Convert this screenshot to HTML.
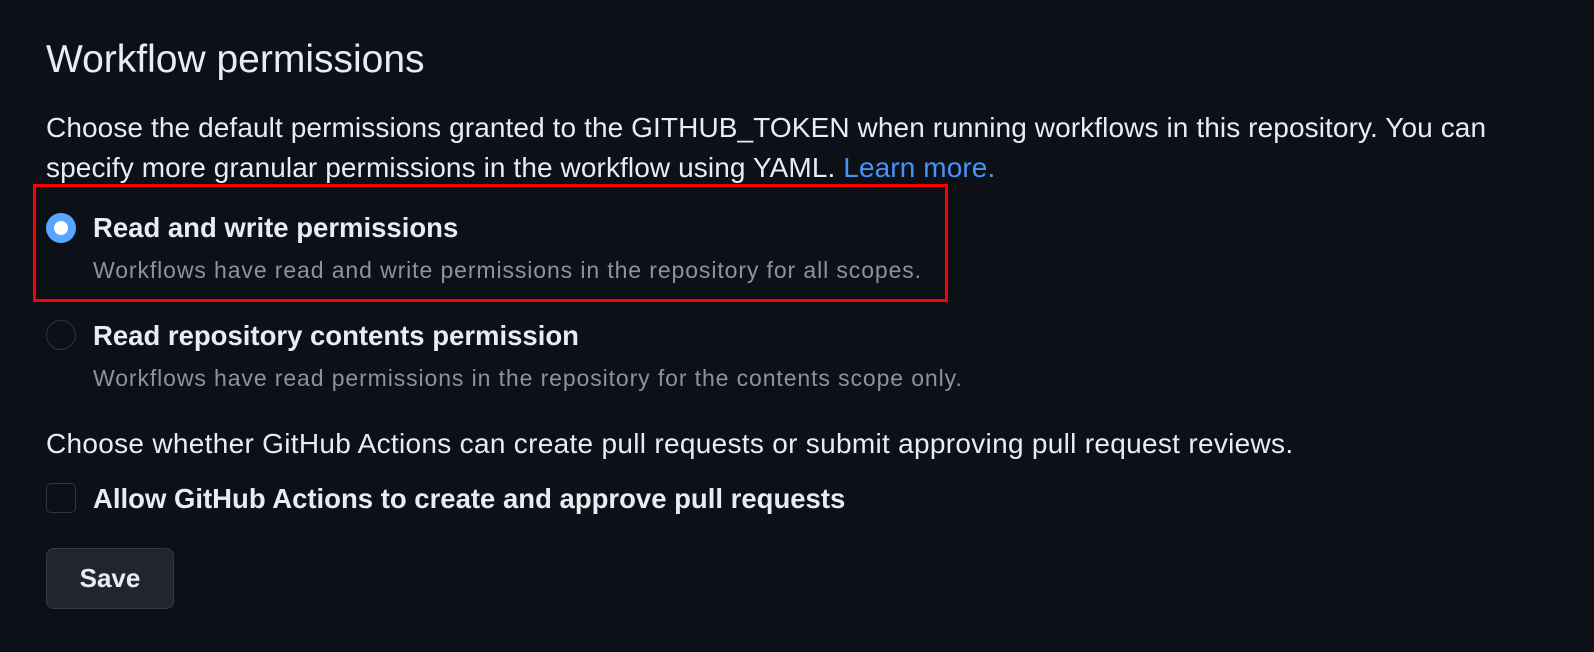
<!DOCTYPE html>
<html><head><meta charset="utf-8"><style>
body{margin:0;width:1594px;height:652px;background:#0d1117;font-family:"Liberation Sans",sans-serif;color:#e6edf3;position:relative;overflow:hidden}
.a{position:absolute;white-space:nowrap}
h1{position:absolute;left:46px;top:37px;margin:0;font-weight:400;font-size:39px;line-height:46px;color:#e6edf3}
.p{font-size:28px;color:#e6edf3;line-height:40px;letter-spacing:0.3px}
.b{font-size:27.5px;line-height:32px;font-weight:700;color:#e6edf3}
.d{font-size:23px;line-height:28px;color:#8b949e;letter-spacing:0.9px}
a{color:#4493f8;text-decoration:none}
</style></head><body>
<h1>Workflow permissions</h1>
<div class="a p" style="left:46px;top:108px;letter-spacing:0.1px">Choose the default permissions granted to the GITHUB_TOKEN when running workflows in this repository. You can<br>specify more granular permissions in the workflow using YAML. <a>Learn more.</a></div>
<div class="a" style="left:33px;top:184px;width:909px;height:112px;border:3px solid #ff0000"></div>
<div class="a" style="left:46px;top:213px;width:30px;height:30px;border-radius:50%;background:#58a6ff"></div>
<div class="a" style="left:54px;top:221px;width:14px;height:14px;border-radius:50%;background:#fff"></div>
<div class="a b" style="left:93px;top:212px">Read and write permissions</div>
<div class="a d" style="left:93px;top:256px">Workflows have read and write permissions in the repository for all scopes.</div>
<div class="a" style="left:46px;top:320px;width:28px;height:28px;border-radius:50%;border:1px solid #30363d"></div>
<div class="a b" style="left:93px;top:320px">Read repository contents permission</div>
<div class="a d" style="left:93px;top:364px">Workflows have read permissions in the repository for the contents scope only.</div>
<div class="a p" style="left:46px;top:424px">Choose whether GitHub Actions can create pull requests or submit approving pull request reviews.</div>
<div class="a" style="left:46px;top:483px;width:28px;height:28px;border-radius:5px;border:1px solid #30363d"></div>
<div class="a b" style="left:93px;top:483px">Allow GitHub Actions to create and approve pull requests</div>
<div class="a" style="left:46px;top:548px;width:126px;height:59px;border-radius:8px;border:1px solid #363b42;background:#21262d;font-size:26px;font-weight:700;color:#e6edf3;text-align:center;line-height:59px">Save</div>
</body></html>
